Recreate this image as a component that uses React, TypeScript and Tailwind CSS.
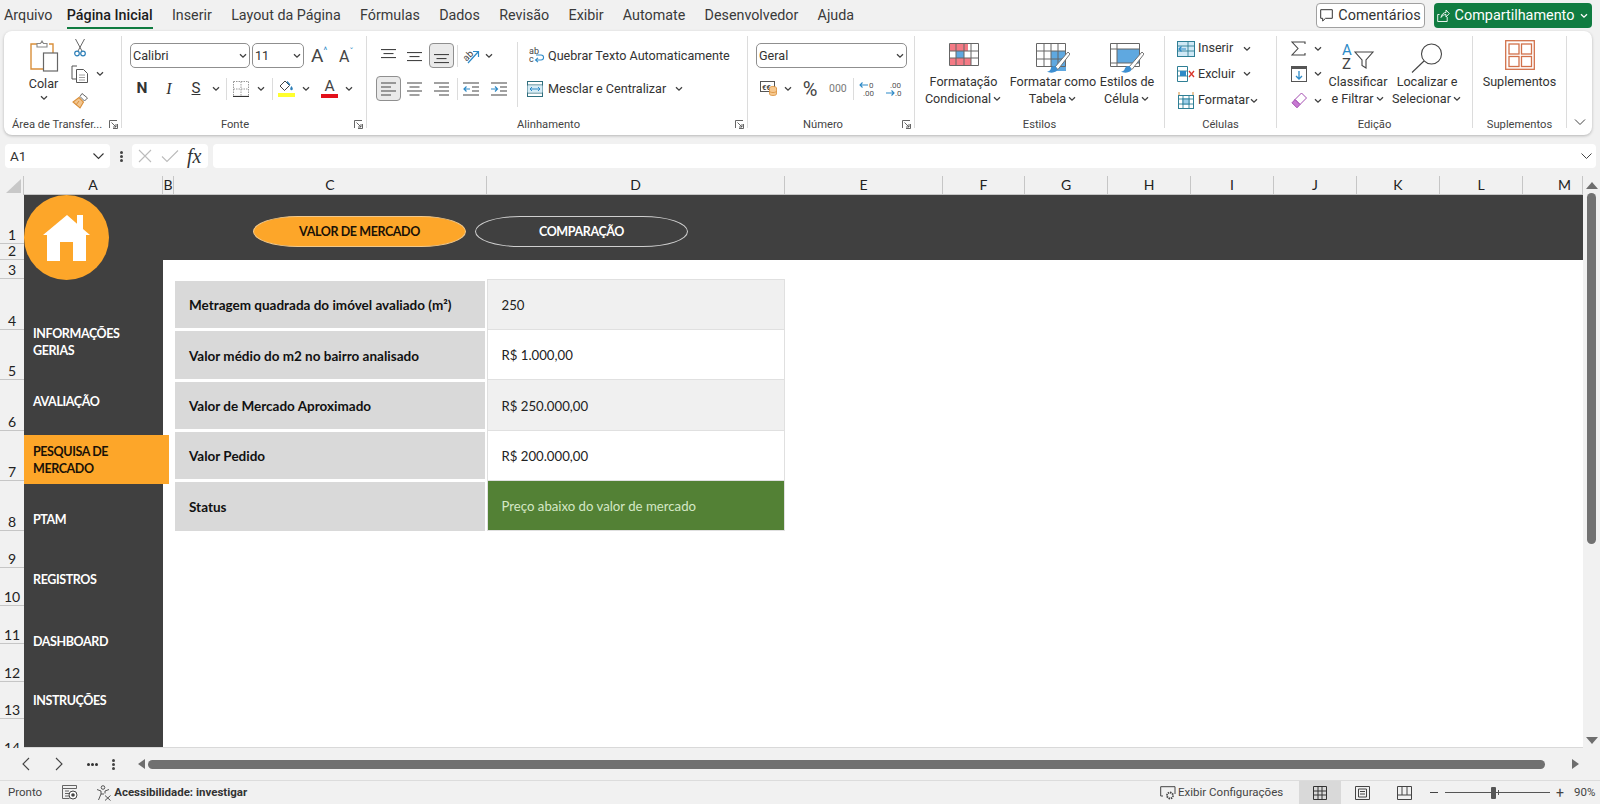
import React from "react";

const Chev = ({ className = "", color = "#404040" }: { className?: string; color?: string }) => (
  <svg width="10" height="6" viewBox="0 0 10 6" className={"shrink-0 " + className}>
    <path d="M2 1.2 5 4.2 8 1.2" fill="none" stroke={color} strokeWidth="1.3" />
  </svg>
);

const Launcher = ({ className = "" }: { className?: string }) => (
  <svg width="9" height="9" viewBox="0 0 9 9" className={"shrink-0 " + className}>
    <path d="M.5 8V.5H8M8.5 4v4.5H4M2.5 2.5 7 7M7 4v3H4" fill="none" stroke="#555" strokeWidth=".9" />
  </svg>
);

const Lines = ({ y, w }: { y: number[]; w: number[] }) => (
  <svg width="15" height="20" viewBox="0 0 15 20" className="shrink-0">
    {y.map((v, i) => {
      const x = w[i] === 15 ? 0 : (15 - w[i]) / 2;
      return <rect key={i} x={x} y={v} width={w[i]} height="1.1" fill="#444" />;
    })}
  </svg>
);

const AlignLeft = () => (
  <svg width="15" height="16" viewBox="0 0 15 16">
    <path d="M0 2h15M0 6h10M0 10h15M0 14h10" stroke="#444" strokeWidth="1.1" />
  </svg>
);
const AlignCenter = () => (
  <svg width="15" height="16" viewBox="0 0 15 16">
    <path d="M0 2h15M2.5 6h10M0 10h15M2.5 14h10" stroke="#444" strokeWidth="1.1" />
  </svg>
);
const AlignRight = () => (
  <svg width="15" height="16" viewBox="0 0 15 16">
    <path d="M0 2h15M5 6h10M0 10h15M5 14h10" stroke="#444" strokeWidth="1.1" />
  </svg>
);

const Indent = ({ flip = false }: { flip?: boolean }) => (
  <svg width="16" height="16" viewBox="0 0 16 16">
    <path d="M0 2h16M9 6h7M9 10h7M0 14h16" stroke="#444" strokeWidth="1.1" />
    <path d={flip ? "M0 8h6M4 5.5 6.5 8 4 10.5" : "M7 8H1M3.5 5.5 1 8l2.5 2.5"} fill="none" stroke="#2d8ac7" strokeWidth="1.2" />
  </svg>
);

const Clipboard = () => (
  <svg width="30" height="32" viewBox="0 0 30 32">
    <path d="M12 4H2v25h13" fill="#fff" stroke="#d98f3a" strokeWidth="1.4" />
    <path d="M20 4h4v9" fill="none" stroke="#d98f3a" strokeWidth="1.4" />
    <path d="M8 7V3.5h3.5L13 1l1.5 2.5H18V7Z" fill="#fff" stroke="#888" strokeWidth="1.1" />
    <rect x="14.5" y="13" width="14" height="18" fill="#fff" stroke="#666" strokeWidth="1.2" />
  </svg>
);
const Scissors = () => (
  <svg width="12" height="18" viewBox="0 0 12 18">
    <path d="M1.5 0 8 12M10.5 0 4 12" fill="none" stroke="#666" strokeWidth="1" />
    <circle cx="3" cy="14.5" r="2.3" fill="none" stroke="#2d7fb8" strokeWidth="1.2" />
    <circle cx="9" cy="14.5" r="2.3" fill="none" stroke="#2d7fb8" strokeWidth="1.2" />
  </svg>
);
const CopyIcon = () => (
  <svg width="18" height="18" viewBox="0 0 18 18">
    <path d="M6 1H1v13h4" fill="none" stroke="#555" strokeWidth="1" />
    <path d="M5.5 4.5h7l4 4v9h-11Z" fill="#fff" stroke="#555" strokeWidth="1" />
    <path d="M8 10h6M8 12.5h6M8 15h6" stroke="#888" strokeWidth=".8" />
  </svg>
);
const Brush = () => (
  <svg width="17" height="17" viewBox="0 0 17 17">
    <path d="M10 1.5 15.5 6l-3 3L8 4.5Z" fill="#fff" stroke="#666" strokeWidth="1" />
    <path d="M7 5.5 11.5 10 8 16 1 10Z" fill="#f2c58f" stroke="#d98f3a" strokeWidth="1.1" />
    <path d="M4 13 7 9" stroke="#d98f3a" strokeWidth="1" />
  </svg>
);
const Borders = () => (
  <svg width="16" height="16" viewBox="0 0 16 16">
    <path d="M.5.5h15v15M.5.5v15M8 .5v15M.5 8h15" fill="none" stroke="#999" strokeWidth="1" strokeDasharray="1.5 1" />
    <path d="M0 15.5h16" stroke="#333" strokeWidth="1.2" />
  </svg>
);
const Fill = () => (
  <div className="flex flex-col items-center w-[17px]">
    <svg width="15" height="12" viewBox="0 0 15 12">
      <path d="M6 1 1 6l4.5 4.5L10.5 5.5Z" fill="#fff" stroke="#444" strokeWidth="1" />
      <path d="M11 5 8 1.5" stroke="#2d7fb8" strokeWidth="1.2" />
      <path d="M12.5 6c1 1.6 1.6 2.4 1.2 3.4-.5 1-2 1-2.4 0-.3-1 .3-2 1.2-3.4Z" fill="#2d7fb8" />
    </svg>
    <div className="w-[17px] h-[4px] bg-[#ffff2e] mt-[1px]" />
  </div>
);

const OrientIcon = () => (
  <svg width="17" height="17" viewBox="0 0 17 17" className="overflow-visible">
    <text x="0" y="12" fontSize="9.5" fill="#444" transform="rotate(-45 5 9)" fontFamily="Roboto">ab</text>
    <path d="M5 16 15 5M10 4.5h5.5V10" fill="none" stroke="#2d8ac7" strokeWidth="1.2" />
  </svg>
);
const WrapIcon = () => (
  <svg width="16" height="17" viewBox="0 0 16 17" className="overflow-visible">
    <text x="0" y="7" fontSize="9" fill="#444" fontFamily="Roboto">ab</text>
    <text x="0" y="15" fontSize="9" fill="#444" fontFamily="Roboto">c</text>
    <path d="M7 13h5c3.4 0 3.4-5 0-5H7M9 10.8 6.5 13 9 15.2" fill="none" stroke="#2d8ac7" strokeWidth="1.1" />
  </svg>
);
const MergeIcon = () => (
  <svg width="16" height="16" viewBox="0 0 16 16">
    <rect x=".5" y=".5" width="15" height="15" fill="#fff" stroke="#2f6f7e" strokeWidth="1" />
    <path d="M0 4h16M0 12h16" stroke="#2f6f7e" strokeWidth="1" />
    <path d="M.5 4.5h15v7H.5Z" fill="#d6ecf6" />
    <path d="M3 8h10M5 6 3 8l2 2M11 6l2 2-2 2" fill="none" stroke="#2d8ac7" strokeWidth="1" />
  </svg>
);
const Accounting = () => (
  <svg width="17" height="15" viewBox="0 0 17 15">
    <rect x=".5" y=".5" width="14" height="10" fill="#fff" stroke="#555" />
    <text x="2" y="8.5" fontSize="7.5" fontWeight="700" fill="#444" fontFamily="Roboto">€€</text>
    <ellipse cx="13" cy="7" rx="3.5" ry="1.6" fill="#f6c88f" stroke="#d98f3a" strokeWidth=".8" />
    <path d="M9.5 7v6c0 2 7 2 7 0V7" fill="#f6c88f" stroke="#d98f3a" strokeWidth=".8" />
    <path d="M9.5 10c0 2 7 2 7 0" fill="none" stroke="#d98f3a" strokeWidth=".8" />
  </svg>
);
const DecInc = () => (
  <svg width="16" height="16" viewBox="0 0 16 16" className="overflow-visible">
    <text x="10" y="7" fontSize="8" fill="#555" fontFamily="Roboto">0</text>
    <text x="4" y="15" fontSize="8" fill="#555" fontFamily="Roboto">.00</text>
    <path d="M9 4H1M3.5 1.5 1 4l2.5 2.5" fill="none" stroke="#2d8ac7" strokeWidth="1.1" />
  </svg>
);
const DecDec = () => (
  <svg width="16" height="16" viewBox="0 0 16 16" className="overflow-visible">
    <text x="4" y="7" fontSize="8" fill="#555" fontFamily="Roboto">.00</text>
    <text x="9" y="15" fontSize="8" fill="#555" fontFamily="Roboto">.0</text>
    <path d="M0 12h8M5.5 9.5 8 12l-2.500 2.500" fill="none" stroke="#2d8ac7" strokeWidth="1.1" />
  </svg>
);

const CondFormat = () => (
  <svg width="30" height="23" viewBox="0 0 30 23">
    <rect x="1" y="1" width="28" height="21" fill="#fff" />
    <rect x="1" y="1" width="18" height="7" fill="#f47a85" />
    <rect x="1" y="15" width="21" height="7" fill="#f47a85" />
    <rect x="7" y="8" width="8" height="7" fill="#5fa8e0" />
    <path d="M.5.5h29v22H.5ZM.5 8h29M.5 15h29M7 .5v22M15 .5v22M22 .5v22" fill="none" stroke="#666" strokeWidth="1" />
  </svg>
);
const BrushOver = () => (
  <>
    <path d="M32 9 19 24l3 2.500L34 11Z" fill="#fff" stroke="#666" strokeWidth=".9" />
    <path d="M18 23c-2 0-3 2-3.500 3.500-.8 1.500-2 2-3.500 2 2.500 1.800 8 1.500 10-1 .8-1.500-.5-4.500-3-4.500Z" fill="#3d8fd1" />
  </>
);
const FormatTable = () => (
  <svg width="34" height="30" viewBox="0 0 34 30">
    <rect x="15" y="8" width="15" height="20" fill="#5fa8e0" />
    <path d="M.5.5h29v23H.5ZM.5 8h29M.5 16h29M8 .5v23M15 .5v23M22 .5v23" fill="none" stroke="#666" strokeWidth="1" />
    <BrushOver />
  </svg>
);
const CellStyles = () => (
  <svg width="34" height="30" viewBox="0 0 34 30">
    <rect x="7" y="6" width="22" height="14" fill="#5fa8e0" />
    <path d="M.5.5h29v23H.5ZM.5 6h29M.5 20h29M7 .5v23" fill="none" stroke="#666" strokeWidth="1" />
    <BrushOver />
  </svg>
);
const InsertCells = () => (
  <svg width="18" height="16" viewBox="0 0 18 16">
    <rect x=".5" y=".5" width="17" height="15" fill="#cfe8f5" stroke="#2f7f95" />
    <path d="M0 5h18M0 10h18M11 0v16" stroke="#2f7f95" strokeWidth=".9" />
    <path d="M9 8H2M4.500 5.500 2 8l2.500 2.500" fill="none" stroke="#2d8ac7" strokeWidth="1.2" />
  </svg>
);
const DeleteCells = () => (
  <svg width="18" height="16" viewBox="0 0 18 16">
    <path d="M.5.5h10v15H.5Z" fill="#fff" stroke="#2f7f95" />
    <path d="M0 5h11M0 10h11" stroke="#2f7f95" strokeWidth=".9" />
    <rect x="3" y="5" width="6" height="5" fill="#2d8ac7" />
    <path d="M12 5l5 6M17 5l-5 6" stroke="#d9352b" strokeWidth="1.3" />
  </svg>
);
const FormatCells = () => (
  <svg width="18" height="17" viewBox="0 0 18 17">
    <rect x="1.500" y="3.500" width="15" height="13" fill="#fff" stroke="#2f7f95" />
    <rect x="5" y="6" width="8" height="7" fill="#9fd0ea" />
    <path d="M1 7h16M1 12h16M6 3v14M12 3v14" stroke="#2f7f95" strokeWidth=".9" />
    <path d="M2 0v3M16 0v3" stroke="#d98f3a" strokeWidth="1" />
  </svg>
);
const Sigma = () => (
  <svg width="15" height="15" viewBox="0 0 15 15">
    <path d="M14 3V1H1l6 6.500L1 14h13v-2" fill="none" stroke="#444" strokeWidth="1.100" />
  </svg>
);
const FillDown = () => (
  <svg width="16" height="16" viewBox="0 0 16 16">
    <rect x=".5" y=".5" width="15" height="15" fill="#fff" stroke="#555" />
    <rect x="0" y="0" width="16" height="3" fill="#555" />
    <path d="M8 5v8M5 10l3 3 3-3" fill="none" stroke="#2d8ac7" strokeWidth="1.300" />
  </svg>
);
const Eraser = () => (
  <svg width="16" height="17" viewBox="0 0 16 17">
    <path d="M10.500 1 15.500 6 9 12.500 4 7.500Z" fill="#fff" stroke="#a34cb0" strokeWidth="1" />
    <path d="M4 7.500 9 12.500 6 15.800 1 10.800Z" fill="#c77ad2" stroke="#a34cb0" strokeWidth="1" />
  </svg>
);
const SortFilter = () => (
  <svg width="32" height="27" viewBox="0 0 32 27" className="overflow-visible">
    <text x="0" y="12" fontSize="15" fill="#2d8ac7" fontFamily="Roboto">A</text>
    <text x="0" y="26" fontSize="15" fill="#444" fontFamily="Roboto">Z</text>
    <path d="M13 9h18l-7 8v8l-4-2.500V17Z" fill="#fff" stroke="#444" strokeWidth="1.100" />
  </svg>
);
const Magnifier = () => (
  <svg width="32" height="30" viewBox="0 0 32 30">
    <circle cx="20.500" cy="11" r="10" fill="#fff" stroke="#444" strokeWidth="1.100" />
    <path d="M13 18 1 29.500" stroke="#444" strokeWidth="1.100" />
  </svg>
);
const AddIns = () => (
  <svg width="30" height="30" viewBox="0 0 30 30" fill="none" stroke="#d2714a" strokeWidth="1.300">
    <rect x=".7" y=".7" width="28.600" height="28.600" />
    <rect x="4" y="4" width="10" height="10" />
    <rect x="16.500" y="4" width="10" height="10" />
    <rect x="4" y="16.500" width="10" height="10" />
    <rect x="16.500" y="16.500" width="10" height="10" />
  </svg>
);

const House = () => (
  <svg width="48" height="46" viewBox="0 0 48 46">
    <path d="M24 0 34 8.700V0h6v13.900L47 20h-4v26H30V27H17v19H4V20H0Z" fill="#fff" />
  </svg>
);

const Group = ({ label, width, labelClass = "justify-center", launcher, children }: {
  label: string; width: string; labelClass?: string; launcher?: boolean; children: React.ReactNode;
}) => (
  <div className={"flex flex-col h-[92px] border-r border-[#dcdcdc] shrink-0 " + width}>
    <div className="h-[80px] flex">{children}</div>
    <div className={"relative h-[12px] flex text-[11.2px] leading-[17px] text-[#444] whitespace-nowrap " + labelClass}>
      <span>{label}</span>
      {launcher && <Launcher className="absolute right-[3px] top-[4px]" />}
    </div>
  </div>
);

const Select = ({ value, className }: { value: string; className: string }) => (
  <div className={"h-[25px] rounded-[5px] border border-[#8f8f8f] bg-white flex items-center justify-between pl-[2px] pr-[1px] text-[12.6px] text-[#333] " + className}>
    <span className="pt-[1px]">{value}</span>
    <Chev />
  </div>
);

const BigButton = ({ icon, lines, width, chev }: { icon: React.ReactNode; lines: string[]; width: string; chev?: boolean }) => (
  <div className={"flex flex-col items-center pt-[7px] text-[12.6px] leading-[17px] text-[#333] whitespace-nowrap shrink-0 " + width}>
    <div className="h-[30px] flex items-start justify-center">{icon}</div>
    {lines.map((l, i) => (
      <div key={l} className="flex items-center">
        {l}
        {chev && i === lines.length - 1 && <Chev className="ml-[1px]" />}
      </div>
    ))}
  </div>
);

const CellRow = ({ icon, label, height, chevClass }: { icon: React.ReactNode; label: string; height: string; chevClass: string }) => (
  <div className={"flex items-center pl-[12px] text-[12.6px] text-[#333] " + height}>
    <div className="w-[18px] flex justify-center">{icon}</div>
    <span className="ml-[3px]">{label}</span>
    <Chev className={chevClass} />
  </div>
);

const colHeaders = [
  ["A", "w-[139px]"], ["B", "w-[11px]"], ["C", "w-[313px]"], ["D", "w-[298px]"], ["E", "w-[158px]"],
  ["F", "w-[82px]"], ["G", "w-[83px]"], ["H", "w-[83px]"], ["I", "w-[83px]"], ["J", "w-[83px]"],
  ["K", "w-[83px]"], ["L", "w-[83px]"], ["M", "w-[60px] pl-[24px]"],
];

const rowHeaders = [
  ["1", "h-[49px]"], ["2", "h-[16px]"], ["3", "h-[19px]"], ["4", "h-[51px]"], ["5", "h-[50px]"],
  ["6", "h-[51px]"], ["7", "h-[50px]"], ["8", "h-[50px]"], ["9", "h-[37px]"], ["10", "h-[38px]"],
  ["11", "h-[38px]"], ["12", "h-[38px]"], ["13", "h-[37px]"], ["14", "h-[38px]"],
];

const tableRows = [
  { label: "Metragem quadrada do imóvel avaliado (m²)", value: "250", h: "h-[51px]", left: "border-t-2 border-b-2", right: "bg-[#f0f0f0] text-[#222]" },
  { label: "Valor médio do m2 no bairro analisado", value: "R$ 1.000,00", h: "h-[50px]", left: "border-t border-b", right: "-mt-px bg-white text-[#222]" },
  { label: "Valor de Mercado Aproximado", value: "R$ 250.000,00", h: "h-[51px]", left: "border-t-2 border-b-2", right: "-mt-px bg-[#f0f0f0] text-[#222]" },
  { label: "Valor Pedido", value: "R$ 200.000,00", h: "h-[50px]", left: "border-t border-b-2", right: "-mt-px bg-white text-[#222]" },
  { label: "Status", value: "Preço abaixo do valor de mercado", h: "h-[50px]", left: "border-t", right: "-mt-px bg-[#538135] border-[#538135] text-[#d5e8c6]" },
];

const tabs = ["Arquivo", "Página Inicial", "Inserir", "Layout da Página", "Fórmulas", "Dados", "Revisão", "Exibir", "Automate", "Desenvolvedor", "Ajuda"];

const menu = [
  { lines: ["INFORMAÇÕES", "GERIAS"], cls: "text-white pt-[4px]" },
  { lines: ["AVALIAÇÃO"], cls: "text-white pt-[4px]" },
  { lines: ["PESQUISA DE", "MERCADO"], cls: "bg-[#fda629] text-[#1a1207] w-[145px] pt-[2px]" },
  { lines: ["PTAM"], cls: "text-white pt-[2px]" },
  { lines: ["REGISTROS"], cls: "text-white pt-[4px]" },
  { lines: ["DASHBOARD"], cls: "text-white mt-[2px] pt-[4px]" },
  { lines: ["INSTRUÇÕES"], cls: "text-white pt-[4px]" },
];

export default function App() {
  return (
    <div className="w-[1600px] h-[804px] overflow-hidden bg-[#f1f1f1] flex flex-col font-['Roboto',sans-serif] text-[#333]">
      {/* menu */}
      <div className="h-[31px] flex items-start shrink-0 pl-[4px]">
        <div className="flex gap-[19.3px] text-[14.3px] leading-[31px] text-[#3a3a3a]">
          {tabs.map((t) => (
            <div key={t} className={t === "Página Inicial" ? "h-[29px] -ml-[5px] font-medium text-[#1c1c1c] border-b-[2.5px] border-[#107c41]" : "h-[29px]"}>{t}</div>
          ))}
        </div>
        <div className="ml-auto flex mt-[3px] mr-[8px] gap-[9px]">
          <div className="w-[109px] h-[25px] rounded-[4px] border border-[#a0a0a0] bg-white flex items-center justify-center gap-[5px] text-[14.4px]">
            <svg width="13" height="13" viewBox="0 0 13 13"><path d="M.7.7h11.600v8.600H5.500L2.700 12V9.300H.7Z" fill="none" stroke="#333" strokeWidth="1" /></svg>
            Comentários
          </div>
          <div className="w-[158px] h-[25px] rounded-[4px] bg-[#107c41] text-white flex items-center justify-center gap-[5px] text-[14.4px]">
            <svg width="13" height="13" viewBox="0 0 13 13"><path d="M2.500 5.500H.7v7h9.500V8M4 8.500C4.500 5 7 3.500 9 3.500V1l3.300 3.500L9 8V5.500C7 5.500 5 6.500 4 8.500Z" fill="none" stroke="#fff" strokeWidth=".9" /></svg>
            Compartilhamento
            <Chev color="#ffffff" />
          </div>
        </div>
      </div>

      {/* ribbon */}
      <div className="h-[104px] mx-[4px] w-[1588px] shrink-0 bg-white rounded-[8px] shadow-[0_1px_3px_rgba(0,0,0,0.25)] flex pt-[5px] pl-[1px]">
        <Group label="Área de Transfer..." width="w-[117px]" labelClass="pl-[7px]" launcher>
          <div className="w-[64px] flex flex-col items-center pt-[4px] pl-[13px]">
            <Clipboard />
            <span className="text-[12.6px] leading-[17px] mt-[3px]">Colar</span>
            <Chev className="mt-[3px]" />
          </div>
          <div className="flex flex-col pt-[3px]">
            <div className="pl-[5px] h-[26px]"><Scissors /></div>
            <div className="h-[27px] flex items-start pl-[2px]"><CopyIcon /><Chev className="ml-[6px] mt-[6px]" /></div>
            <div className="pl-[3px]"><Brush /></div>
          </div>
        </Group>

        <Group label="Fonte" width="w-[245px]" labelClass="justify-center pr-[18px]" launcher>
          <div className="flex flex-col pt-[7px] pl-[8px] gap-[8px]">
            <div className="flex items-center h-[25px]">
              <Select value="Calibri" className="w-[120px]" />
              <Select value="11" className="w-[52px] ml-[2px]" />
              <div className="ml-[7px] w-[20px] text-[19px] leading-none text-[#444] flex items-start">A<span className="text-[#2d8ac7] text-[9px] leading-[9px]">^</span></div>
              <div className="ml-[8px] w-[20px] text-[16px] leading-none text-[#444] flex items-start pt-[2px]">A<span className="text-[#2d8ac7] text-[9px] leading-[7px]">ˇ</span></div>
            </div>
            <div className="flex items-center h-[25px]">
              <div className="w-[24px] text-center font-bold text-[15.5px]">N</div>
              <div className="w-[24px] ml-[3px] text-center italic text-[16px] font-['Liberation_Serif',serif]">I</div>
              <div className="w-[24px] ml-[3px] text-center text-[15px] underline">S</div>
              <Chev className="ml-[3px]" />
              <div className="w-px h-[22px] bg-[#dcdcdc] ml-[5px]" />
              <div className="ml-[6px]"><Borders /></div>
              <Chev className="ml-[7px]" />
              <div className="w-px h-[22px] bg-[#dcdcdc] ml-[6px]" />
              <div className="ml-[5px]"><Fill /></div>
              <Chev className="ml-[6px]" />
              <div className="ml-[10px] w-[17px] flex flex-col items-center text-[15.5px] leading-[14px] text-[#444]">
                A
                <div className="w-[17px] h-[4px] bg-[#e3101b] mt-[1px]" />
              </div>
              <Chev className="ml-[6px]" />
            </div>
          </div>
        </Group>

        <Group label="Alinhamento" width="w-[381px]" labelClass="pl-[150px]" launcher>
          <div className="w-[150px] flex flex-col pt-[7px] gap-[8px]">
            <div className="flex items-center h-[25px]">
              <div className="ml-[14px]"><Lines y={[3, 7, 11]} w={[15, 10, 15]} /></div>
              <div className="ml-[11px]"><Lines y={[6, 10, 14]} w={[15, 10, 15]} /></div>
              <div className="ml-[7px] w-[25px] h-[25px] rounded-[4px] bg-[#eaeaea] border border-[#8f8f8f] flex items-center justify-center"><Lines y={[8, 12, 16]} w={[15, 10, 15]} /></div>
              <div className="w-px h-[22px] bg-[#dcdcdc] ml-[3px]" />
              <div className="ml-[5px]"><OrientIcon /></div>
              <Chev className="ml-[4px]" />
            </div>
            <div className="flex items-center h-[25px]">
              <div className="ml-[9px] w-[25px] h-[25px] rounded-[4px] bg-[#eaeaea] border border-[#8f8f8f] flex items-center justify-center"><AlignLeft /></div>
              <div className="ml-[6px]"><AlignCenter /></div>
              <div className="ml-[12px]"><AlignRight /></div>
              <div className="w-px h-[22px] bg-[#dcdcdc] ml-[8px]" />
              <div className="ml-[5px]"><Indent /></div>
              <div className="ml-[12px]"><Indent flip /></div>
            </div>
          </div>
          <div className="w-px h-[65px] bg-[#dcdcdc] mt-[6px]" />
          <div className="flex flex-col pt-[7px] gap-[8px] text-[12.6px] text-[#333] whitespace-nowrap">
            <div className="flex items-center h-[25px] pl-[11px]"><WrapIcon /><span className="ml-[3px] pt-[1px]">Quebrar Texto Automaticamente</span></div>
            <div className="flex items-center h-[25px] pl-[9px]"><MergeIcon /><span className="ml-[5px] pt-[1px]">Mesclar e Centralizar</span><Chev className="ml-[8px]" /></div>
          </div>
        </Group>

        <Group label="Número" width="w-[167px]" labelClass="justify-center pr-[16px]" launcher>
          <div className="flex flex-col pt-[7px] gap-[8px] pl-[8px]">
            <Select value="Geral" className="w-[151px]" />
            <div className="flex items-center h-[25px]">
              <div className="ml-[4px]"><Accounting /></div>
              <Chev className="ml-[6px]" />
              <div className="ml-[8px] w-[18px] text-[20px] leading-none text-[#444] text-center">%</div>
              <div className="ml-[10px] w-[17px] text-[10.5px] text-[#777] text-center">000</div>
              <div className="w-px h-[22px] bg-[#dcdcdc] ml-[7px]" />
              <div className="ml-[5px]"><DecInc /></div>
              <div className="ml-[11px]"><DecDec /></div>
            </div>
          </div>
        </Group>

        <Group label="Estilos" width="w-[250px]">
          <BigButton icon={<CondFormat />} lines={["Formatação", "Condicional"]} width="w-[97px]" chev />
          <BigButton icon={<FormatTable />} lines={["Formatar como", "Tabela"]} width="w-[82px]" chev />
          <BigButton icon={<CellStyles />} lines={["Estilos de", "Célula"]} width="w-[66px]" chev />
        </Group>

        <Group label="Células" width="w-[112px]">
          <div className="flex flex-col w-full">
            <CellRow icon={<InsertCells />} label="Inserir" height="h-[25px]" chevClass="ml-[9px]" />
            <CellRow icon={<DeleteCells />} label="Excluir" height="h-[26px]" chevClass="ml-[7px]" />
            <CellRow icon={<FormatCells />} label="Formatar" height="h-[27px]" chevClass="ml-0" />
          </div>
        </Group>

        <Group label="Edição" width="w-[196px]">
          <div className="w-[51px] shrink-0 flex flex-col pl-[14px]">
            <div className="h-[25px] flex items-center"><Sigma /><Chev className="ml-[7px]" /></div>
            <div className="h-[26px] flex items-center"><FillDown /><Chev className="ml-[6px]" /></div>
            <div className="h-[27px] flex items-center"><Eraser /><Chev className="ml-[6px]" /></div>
          </div>
          <BigButton icon={<SortFilter />} lines={["Classificar", "e Filtrar"]} width="w-[60px]" chev />
          <BigButton icon={<Magnifier />} lines={["Localizar e", "Selecionar"]} width="w-[78px]" chev />
        </Group>

        <Group label="Suplementos" width="w-[94px]">
          <div className="w-full flex flex-col items-center pt-[4px] text-[12.6px] leading-[17px]">
            <div className="h-[33px]"><AddIns /></div>
            <span>Suplementos</span>
          </div>
        </Group>

        <div className="flex-1 flex items-end justify-center pb-[7px]">
          <svg width="14" height="12" viewBox="0 0 14 12"><path d="M2 3.500 7 8.500 12 3.500" fill="none" stroke="#444" strokeWidth="1" /></svg>
        </div>
      </div>

      {/* formula bar */}
      <div className="h-[24px] mt-[9px] shrink-0 flex items-center pl-[5px] pr-[4px]">
        <div className="w-[105px] h-[24px] rounded-[4px] bg-white flex items-center justify-between px-[5px] text-[13.5px]">
          A1
          <svg width="13" height="8" viewBox="0 0 13 8"><path d="M1.500 1.500 6.500 6.500 11.500 1.500" fill="none" stroke="#333" strokeWidth="1.100" /></svg>
        </div>
        <div className="w-[3px] h-[11px] mx-[9.500px] flex flex-col justify-between">
          <div className="h-[3px] bg-[#444] rounded-full" /><div className="h-[3px] bg-[#444] rounded-full" /><div className="h-[3px] bg-[#444] rounded-full" />
        </div>
        <div className="w-[76px] h-[24px] rounded-[4px] bg-white flex items-center pl-[6px]">
          <svg width="14" height="14" viewBox="0 0 14 14"><path d="M1 1l12 12M13 1 1 13" stroke="#bcbcbc" strokeWidth="1.100" /></svg>
          <svg width="18" height="14" viewBox="0 0 18 14" className="ml-[9px]"><path d="M1 7.500 6 12.500 17 1.500" fill="none" stroke="#bcbcbc" strokeWidth="1.100" /></svg>
          <span className="ml-[8px] font-['Liberation_Serif',serif] italic text-[20px] leading-none text-[#333]">fx</span>
        </div>
        <div className="flex-1 ml-[5px] h-[24px] rounded-[4px] bg-white flex items-center justify-end pr-[3px]">
          <svg width="13" height="8" viewBox="0 0 13 8"><path d="M1.500 1.500 6.500 6.500 11.500 1.500" fill="none" stroke="#444" strokeWidth="1" /></svg>
        </div>
      </div>

      {/* column headers */}
      <div className="h-[19px] mt-[8px] shrink-0 flex font-['Lato',sans-serif] text-[14px] leading-[18px] text-[#222]">
        <div className="w-[24px] flex items-end justify-end pr-[2px] pb-[2px] border-r border-[#c6c6c6]">
          <svg width="15" height="14" viewBox="0 0 15 14"><path d="M15 0v14H0Z" fill="#c8c8c8" /></svg>
        </div>
        {colHeaders.map(([c, w]) => (
          <div key={c} className={"text-center border-r border-[#c6c6c6] border-b " + w}>{c}</div>
        ))}
        <div className="flex-1 flex justify-center pt-[6px]">
          <svg width="12" height="7" viewBox="0 0 12 7"><path d="M6 0 12 7H0Z" fill="#6e6e6e" /></svg>
        </div>
      </div>

      {/* sheet */}
      <div className="h-[553px] shrink-0 flex font-['Lato',sans-serif]">
        <div className="w-[24px] overflow-hidden shrink-0">
          {rowHeaders.map(([n, h]) => (
            <div key={n} className={"flex items-end justify-center border-b border-[#c6c6c6] text-[14px] leading-[17px] text-[#222] " + h}>{n}</div>
          ))}
        </div>

        <div className="relative w-[1559px] shrink-0 bg-white flex flex-col border-b border-[#d9d9d9]">
          <div className="h-[65px] bg-[#404040] flex items-start pl-[229px] pt-[21px] gap-[9px] shrink-0">
            <div className="w-[213px] h-[31px] pt-[2px] rounded-[45px/15.5px] bg-[#fda629] border border-[#f3c98a] flex items-center justify-center text-[12.5px] tracking-[-0.4px] font-bold text-[#1a1207]">VALOR DE MERCADO</div>
            <div className="w-[213px] h-[31px] pt-[2px] rounded-[45px/15.5px] border border-[#cfcfcf] flex items-center justify-center text-[12.5px] tracking-[-0.4px] font-bold text-white">COMPARAÇÃO</div>
          </div>
          <div className="flex flex-1 min-h-0">
            <div className="w-[139px] bg-[#404040] shrink-0 flex flex-col gap-[10.500px] pt-[56px]">
              {menu.map((m) => (
                <div key={m.lines[0]} className={"relative h-[49px] shrink-0 flex flex-col justify-center pl-[9px] text-[12.5px] tracking-[-0.4px] leading-[16.500px] font-bold " + m.cls}>
                  {m.lines.map((l) => <div key={l}>{l}</div>)}
                </div>
              ))}
            </div>
            <div className="flex-1 pl-[12px] pt-[19px]">
              {tableRows.map((r) => (
                <div key={r.label} className={"flex " + r.h}>
                  <div className={"w-[310px] bg-[#d9d9d9] border-white flex items-center pl-[14px] pt-[2px] text-[13.5px] font-bold text-[#111] " + r.left}>{r.label}</div>
                  <div className={"w-[298px] ml-[1.500px] border border-[#e0e0e0] flex items-center pl-[14px] pt-[3px] text-[13.2px] " + r.right}>{r.value}</div>
                </div>
              ))}
            </div>
          </div>
          {/* home button sits over the band */}
          <div className="absolute left-0 top-0 w-[85px] h-[85px] rounded-full bg-[#fda629] flex items-center justify-center">
            <House />
          </div>
        </div>

        <div className="flex-1 flex flex-col items-center">
          <div className="w-[9px] h-[351px] mt-[-2px] rounded-full bg-[#727272]" />
          <svg width="12" height="7" viewBox="0 0 12 7" className="mt-auto mb-[4px]"><path d="M6 7 12 0H0Z" fill="#6e6e6e" /></svg>
        </div>
      </div>

      {/* sheet tabs row */}
      <div className="h-[33px] shrink-0 flex items-center border-b border-[#dcdcdc]">
        <svg width="10" height="14" viewBox="0 0 10 14" className="ml-[21px]"><path d="M8 1 2 7l6 6" fill="none" stroke="#444" strokeWidth="1.100" /></svg>
        <svg width="10" height="14" viewBox="0 0 10 14" className="ml-[23px]"><path d="M2 1l6 6-6 6" fill="none" stroke="#444" strokeWidth="1.100" /></svg>
        <div className="ml-[23px] flex gap-[1px]">
          <div className="w-[3px] h-[3px] rounded-full bg-[#333]" /><div className="w-[3px] h-[3px] rounded-full bg-[#333]" /><div className="w-[3px] h-[3px] rounded-full bg-[#333]" />
        </div>
        <div className="ml-[14px] w-[3px] h-[11px] flex flex-col justify-between">
          <div className="h-[3px] bg-[#444] rounded-full" /><div className="h-[3px] bg-[#444] rounded-full" /><div className="h-[3px] bg-[#444] rounded-full" />
        </div>
        <svg width="7" height="10" viewBox="0 0 7 10" className="ml-[23px]"><path d="M7 0v10L0 5Z" fill="#6e6e6e" /></svg>
        <div className="ml-[3px] w-[1397px] h-[9px] rounded-full bg-[#707070]" />
        <svg width="7" height="10" viewBox="0 0 7 10" className="ml-[27px]"><path d="M0 0v10l7-5Z" fill="#6e6e6e" /></svg>
      </div>

      {/* status bar */}
      <div className="flex-1 flex items-center text-[11.5px] text-[#444] whitespace-nowrap pr-[4px]">
        <span className="ml-[8px]">Pronto</span>
        <svg width="16" height="15" viewBox="0 0 16 15" className="ml-[20px] shrink-0">
          <path d="M.5.500h14v3H.5ZM.5 3.500v10h7M3 6h4M3 8.500h4M3 11h4" fill="none" stroke="#555" strokeWidth=".9" />
          <circle cx="11" cy="10" r="4" fill="#fff" stroke="#444" strokeWidth="1" />
          <circle cx="11" cy="10" r="1.800" fill="#444" />
        </svg>
        <svg width="16" height="16" viewBox="0 0 16 16" className="ml-[18px] shrink-0">
          <circle cx="7" cy="2.500" r="1.800" fill="none" stroke="#444" strokeWidth=".9" />
          <path d="M1 4.500 5 6v3l-2.500 6M13 4.500 9 6v2.500M5 9h3" fill="none" stroke="#444" strokeWidth=".9" />
          <path d="M9 10.500 14.500 15.500M14.500 10.500 9 15.500" stroke="#444" strokeWidth=".9" />
        </svg>
        <span className="ml-[2px] font-bold text-[#333]">Acessibilidade: investigar</span>

        <svg width="16" height="15" viewBox="0 0 16 15" className="ml-auto shrink-0">
          <path d="M3 11H.7V1.700H15V9" fill="none" stroke="#444" strokeWidth="1" />
          <circle cx="10" cy="10.500" r="3" fill="none" stroke="#444" strokeWidth="1.800" strokeDasharray="1.500 .8" />
        </svg>
        <span className="ml-[2px] w-[101px]">Exibir Configurações</span>
        <div className="ml-[20px] w-[42px] h-full bg-[#d9d9d9] flex items-center justify-center shrink-0">
          <svg width="14" height="14" viewBox="0 0 14 14"><path d="M.5.500h13v13H.5ZM.5 5h13M.5 9h13M5 .5v13M9 .5v13" fill="none" stroke="#333" strokeWidth="1" /></svg>
        </div>
        <svg width="15" height="14" viewBox="0 0 15 14" className="ml-[14px] shrink-0"><path d="M.5.500h14v13H.5ZM3.500 3h8v8h-8ZM5 5.500h5M5 8h5" fill="none" stroke="#444" strokeWidth="1" /></svg>
        <svg width="15" height="14" viewBox="0 0 15 14" className="ml-[27px] shrink-0"><path d="M.5.500h14v13H.5ZM.5 9h14M5 .5V9M10 .5V9" fill="none" stroke="#444" strokeWidth="1" /></svg>
        <div className="ml-[18px] w-[8px] h-px bg-[#444]" />
        <div className="ml-[7px] w-[105px] h-px bg-[#555] flex items-center">
          <div className="ml-[46px] w-[5px] h-[12px] bg-[#555] rounded-[1px]" />
          <div className="ml-[2px] w-px h-[5px] bg-[#555]" />
        </div>
        <span className="ml-[6px] text-[14px] leading-none">+</span>
        <span className="ml-[10px] w-[22px]">90%</span>
      </div>
    </div>
  );
}
